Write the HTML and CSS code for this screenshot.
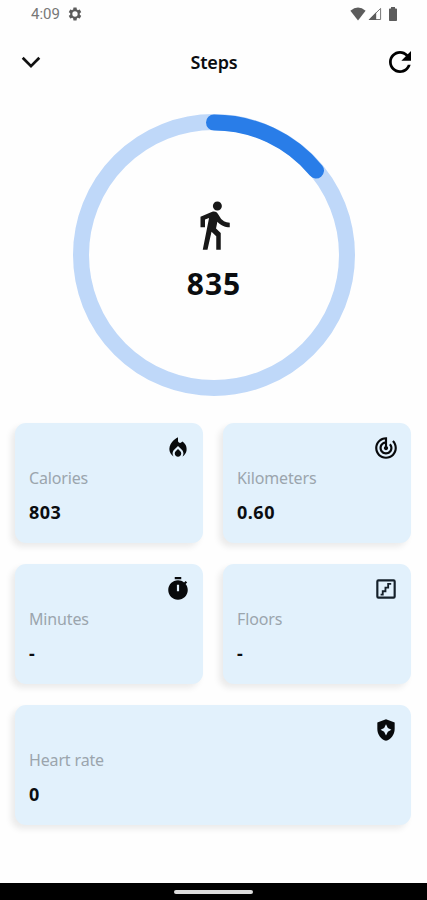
FILE: index.html
```
<!DOCTYPE html>
<html lang="en">
<head>
    <meta charset="UTF-8">
    <meta name="viewport" content="width=device-width, initial-scale=1.0">
    <title>Steps</title>
    <link rel="stylesheet" href="styles.css">
</head>
<body>
    <div class="status-bar">
        <span class="time">4:09</span>
        <svg class="gear" viewBox="0 0 24 24"><path fill-rule="evenodd" d="M19.14 12.94c.04-.3.06-.61.06-.94 0-.32-.02-.64-.07-.94l2.03-1.58c.18-.14.23-.41.12-.61l-1.92-3.32c-.12-.22-.37-.29-.59-.22l-2.39.96c-.5-.38-1.03-.7-1.62-.94l-.36-2.54c-.04-.24-.24-.41-.48-.41h-3.84c-.24 0-.43.17-.47.41l-.36 2.54c-.59.24-1.13.57-1.62.94l-2.39-.96c-.22-.08-.47 0-.59.22L2.74 8.87c-.12.21-.08.47.12.61l2.03 1.58c-.05.3-.09.63-.09.94s.02.64.07.94l-2.03 1.58c-.18.14-.23.41-.12.61l1.92 3.32c.12.22.37.29.59.22l2.39-.96c.5.38 1.03.7 1.62.94l.36 2.54c.05.24.24.41.48.41h3.84c.24 0 .44-.17.47-.41l.36-2.54c.59-.24 1.13-.56 1.62-.94l2.39.96c.22.08.47 0 .59-.22l1.92-3.32c.12-.22.07-.47-.12-.61l-2.01-1.58zM12 8a4 4 0 1 0 0 8 4 4 0 0 0 0-8z"/></svg>
        <div class="status-icons">
            <svg width="16" height="14" viewBox="0 0 16 14"><path d="M8 13.5L.4 3.8Q8-2.6 15.6 3.8z"/></svg>
            <svg width="14" height="14" viewBox="0 0 14 14"><path d="M12.6 1.4v11.1H1.4z" fill="none" stroke="#777"/><path d="M.5 13L8.2 5.3V13z"/></svg>
            <svg class="battery" width="10" height="14" viewBox="0 0 10 14"><path d="M3 0h4v1.5h1.2q.8 0 .8.8v10.9q0 .8-.8.8H1.8q-.8 0-.8-.8V2.3q0-.8.8-.8H3z"/></svg>
        </div>
    </div>

    <div class="header">
        <svg width="20" height="14" viewBox="0 0 20 14"><path class="chevron" d="M1.7 2.8L10 11.1l8.3-8.3"/></svg>
        <h1 class="title">Steps</h1>
        <svg width="22" height="22" viewBox="4 4 16 16"><path d="M17.65 6.35C16.2 4.9 14.21 4 12 4c-4.42 0-7.99 3.58-7.99 8s3.57 8 7.99 8c3.73 0 6.84-2.55 7.73-6h-2.08c-.82 2.33-3.04 4-5.65 4-3.31 0-6-2.69-6-6s2.69-6 6-6c1.66 0 3.14.69 4.22 1.78L13 11h7V4l-2.35 2.35z"/></svg>
    </div>

    <div class="progress">
        <svg class="ring" viewBox="0 0 282 282">
            <circle class="ring-track" cx="141" cy="141" r="133"/>
            <path class="ring-value" d="M141 8.5A132.500 132.500 0 0 1 243 56.500"/>
        </svg>
        <div class="progress-content">
            <svg class="walk" viewBox="0 0 24 24"><path d="M13.5 5.5c1.1 0 2-.9 2-2s-.9-2-2-2-2 .9-2 2 .9 2 2 2zM9.8 8.9L7 23h2.1l1.8-8 2.1 2v6h2v-7.5l-2.1-2 .6-3C14.8 12 16.8 13 19 13v-2c-1.900 0-3.500-1-4.300-2.400l-1-1.600c-.4-.6-1-1-1.700-1-.3 0-.5.1-.8.1L6 8.300V13h2V9.600l1.800-.7"/></svg>
            <div class="steps-count">835</div>
        </div>
    </div>

    <div class="cards">
        <div class="card">
            <svg class="card-icon" viewBox="0 0 24 24"><path d="M16 6l-.44.55C14.38 8.02 12 7.19 12 5.3V2S4 6 4 13c0 2.92 1.56 5.47 3.89 6.86-.56-.79-.89-1.76-.89-2.8 0-1.32.52-2.56 1.47-3.5L12 10.1l3.53 3.47c.95.93 1.47 2.17 1.47 3.5 0 1.02-.31 1.96-.85 2.75 1.89-1.15 3.29-3.06 3.71-5.3.66-3.55-1.07-6.9-3.86-8.52zM12 12.9l-2.13 2.09C9.31 15.55 9 16.28 9 17.06 9 18.68 10.35 20 12 20s3-1.32 3-2.94c0-.78-.31-1.52-.87-2.07L12 12.9z"/></svg>
            <div class="label">Calories</div>
            <div class="value">803</div>
        </div>
        <div class="card">
            <svg class="card-icon" viewBox="0 0 24 24"><path d="M19.07 4.93l-1.41 1.41C19.1 7.79 20 9.79 20 12c0 4.42-3.58 8-8 8s-8-3.58-8-8c0-4.08 3.05-7.44 7-7.93v2.02C8.16 6.57 6 9.03 6 12c0 3.31 2.69 6 6 6s6-2.69 6-6c0-1.66-.67-3.16-1.76-4.24l-1.41 1.41C15.55 9.9 16 10.9 16 12c0 2.21-1.79 4-4 4s-4-1.79-4-4c0-1.86 1.28-3.41 3-3.86v2.14c-.6.35-1 .98-1 1.72 0 1.1.9 2 2 2s2-.9 2-2c0-.74-.4-1.38-1-1.72V2h-1C6.48 2 2 6.48 2 12s4.48 10 10 10 10-4.48 10-10c0-2.76-1.12-5.26-2.93-7.07z"/></svg>
            <div class="label">Kilometers</div>
            <div class="value">0.60</div>
        </div>
        <div class="card">
            <svg class="card-icon" viewBox="0 0 24 24"><path d="M9 1h6v2H9zM19.03 7.39l1.42-1.42c-.43-.51-.9-.99-1.41-1.41l-1.42 1.42C16.07 4.74 14.12 4 12 4c-4.97 0-9 4.03-9 9s4.02 9 9 9 9-4.03 9-9c0-2.12-.74-4.07-1.97-5.61zM13 14h-2V8h2v6z"/></svg>
            <div class="label">Minutes</div>
            <div class="value">-</div>
        </div>
        <div class="card">
            <svg class="card-icon" viewBox="0 0 24 24"><rect class="line" x="4" y="4" width="16" height="16" rx="1"/><path class="stairs" d="M7 17.2h2v-3.100h2.500v-3.400H14V7.300h2.800"/></svg>
            <div class="label">Floors</div>
            <div class="value">-</div>
        </div>
        <div class="card full">
            <svg class="card-icon" viewBox="0 0 24 24"><path fill-rule="evenodd" d="M12 2l8 3v6.1c0 5-3.4 9.700-8 10.900-4.600-1.200-8-5.900-8-10.900V5zM12 6.600l-1.700 3.500L7 11.800l3.300 1.700L12 17l1.700-3.500 3.300-1.700-3.300-1.700z"/></svg>
            <div class="label">Heart rate</div>
            <div class="value">0</div>
        </div>
    </div>

    <div class="nav-bar">
        <div class="nav-handle"></div>
    </div>
</body>
</html>
```
FILE: styles.css
```
* {
    box-sizing: border-box;
}

body {
    margin: 0;
    width: 427px;
    height: 900px;
    display: flex;
    flex-direction: column;
    overflow: hidden;
    background-color: #fefefe;
    font-family: "Noto Sans", "Open Sans", sans-serif;
    color: #0b0d10;
}

svg {
    display: block;
    flex-shrink: 0;
}

.status-bar {
    height: 30px;
    display: flex;
    align-items: center;
    padding: 0 29px 2px 31px;
    fill: #5c5c5c;
}

.time {
    width: 30px;
    font-family: Roboto, sans-serif;
    font-size: 15px;
    color: #777;
}

.gear {
    width: 16px;
    height: 16px;
    margin-left: 6px;
}

.status-icons {
    display: flex;
    align-items: center;
    margin-left: auto;
    gap: 2px;
}

.battery {
    margin-left: 4px;
}

.header {
    height: 64px;
    display: flex;
    align-items: center;
    justify-content: space-between;
    padding: 0 16px 0 21px;
}

.chevron {
    fill: none;
    stroke: #111;
    stroke-width: 2.7;
}

.title {
    margin: 0 2px 0 0;
    font-size: 18px;
    font-weight: 600;
    letter-spacing: -0.2px;
}

.progress {
    width: 282px;
    height: 282px;
    margin: 20px 0 0 73px;
    display: grid;
}

.ring,
.progress-content {
    grid-area: 1 / 1;
}

.ring {
    width: 282px;
    height: 282px;
    fill: none;
    stroke-width: 16;
}

.ring-track {
    stroke: #bfd8f9;
}

.ring-value {
    stroke: #297de8;
    stroke-linecap: round;
}

.progress-content {
    display: flex;
    flex-direction: column;
    align-items: center;
    padding-top: 84px;
}

.walk {
    width: 54px;
    height: 54px;
    fill: #181818;
}

.steps-count {
    margin-top: 12px;
    font-size: 30px;
    font-weight: 700;
    line-height: 40px;
    letter-spacing: 1px;
}

.cards {
    display: grid;
    grid-template-columns: 188px 188px;
    gap: 21.3px 20px;
    padding: 27px 16px 0 15px;
}

.card {
    height: 119.7px;
    display: flex;
    flex-direction: column;
    padding: 12px 12px 0 14px;
    background-color: #e2f1fc;
    border-radius: 11px;
    box-shadow: -4px 4px 6px rgba(0, 0, 0, 0.08);
}

.full {
    grid-column: 1 / 3;
}

.card-icon {
    width: 26px;
    height: 26px;
    align-self: flex-end;
    fill: #080a0c;
}

.line,
.stairs {
    fill: none;
    stroke: #15202a;
    stroke-width: 2;
}

.stairs {
    stroke-width: 1.7;
}

.label {
    margin-top: 5px;
    font-size: 16px;
    line-height: 24px;
    letter-spacing: -0.15px;
    color: #9ba5ad;
}

.value {
    margin-top: 10px;
    font-size: 18px;
    font-weight: 700;
    line-height: 24px;
    letter-spacing: 0.5px;
}

.nav-bar {
    height: 17px;
    margin-top: auto;
    display: flex;
    align-items: center;
    justify-content: center;
    background-color: #000;
}

.nav-handle {
    width: 79px;
    height: 4px;
    border-radius: 2px;
    background-color: #ddd;
}
```
